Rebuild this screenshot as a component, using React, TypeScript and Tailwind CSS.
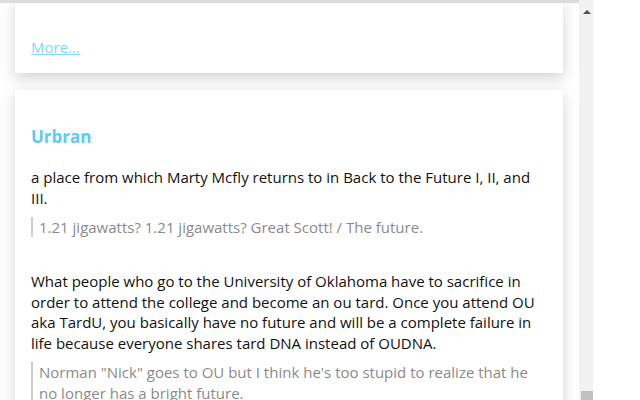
import React from "react";

const font = { fontFamily: '"Open Sans", "Noto Sans", sans-serif' };

export default function App() {
  return (
    <div className="w-[640px] h-[400px] overflow-hidden bg-white flex" style={font}>
      <div className="w-[579px] h-full flex flex-col relative">
        <div className="absolute top-0 left-0 right-0 h-[3px] bg-[#dcdcdc] z-10" />
        <div className="flex flex-col gap-[17px] pt-0">
          <div className="mx-[15px] w-[548px] bg-white shadow-[0_5px_14px_rgba(0,0,0,0.18)] px-4 pt-[35px] pb-[14px]">
            <a href="#" className="text-[15px] leading-[20px] text-[#7fd6fb] underline">More...</a>
          </div>
          <div className="mx-[15px] w-[548px] bg-white shadow-[0_5px_14px_rgba(0,0,0,0.18)] px-4 pt-[35px] pb-6">
            <h2 className="text-[17px] leading-[24px] font-bold text-[#5ccbf6]">Urbran</h2>
            <div className="mt-[18px]">
              <p className="text-[15px] leading-[21px] text-[#111]">
                a place from which Marty Mcfly returns to in Back to the Future I, II, and III.
              </p>
              <blockquote className="mt-[8px] border-l-2 border-[#cccccc] pl-[6px] text-[15px] leading-[20px] text-[#8a8a8a]">
                1.21 jigawatts? 1.21 jigawatts? Great Scott! / The future.
              </blockquote>
            </div>
            <div className="mt-[34px]">
              <p className="text-[15px] leading-[20.7px] text-[#111]">
                What people who go to the University of Oklahoma have to sacrifice in order to attend the college and become an ou tard. Once you attend OU aka TardU, you basically have no future and will be a complete failure in life because everyone shares tard DNA instead of OUDNA.
              </p>
              <blockquote className="mt-[8px] border-l-2 border-[#cccccc] pl-[6px] text-[15px] leading-[20.7px] text-[#8a8a8a]">
                Norman "Nick" goes to OU but I think he's too stupid to realize that he no longer has a bright future.
              </blockquote>
            </div>
          </div>
        </div>
      </div>
      <div className="w-[14px] h-full bg-[#f1f1f1] relative">
        <div className="absolute left-[4px] top-[10px] w-0 h-0 border-l-[4px] border-r-[4px] border-b-[4px] border-l-transparent border-r-transparent border-b-[#505050]" />
        <div className="absolute left-[2px] right-0 top-[391px] h-[20px] bg-[#c1c1c1]" />
      </div>
      <div className="flex-1 bg-white" />
    </div>
  );
}
